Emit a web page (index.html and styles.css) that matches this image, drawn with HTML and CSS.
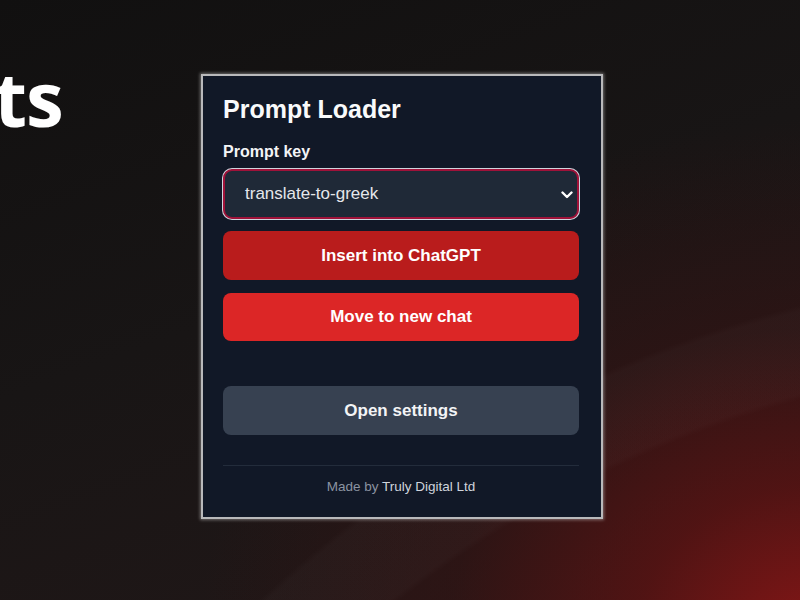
FILE: index.html
```html
<!DOCTYPE html>
<html lang="en">
<head>
<meta charset="utf-8">
<title>Prompt Loader</title>
<link rel="stylesheet" href="styles.css">
</head>
<body>
<div class="page">
  <div class="hero">
    <h1 class="hero-title">ts</h1>
  </div>
  <div class="popup">
    <h2 class="popup-title">Prompt Loader</h2>
    <label class="field-label">Prompt key</label>
    <div class="select" role="combobox">
      <span class="select-value">translate-to-greek</span>
      <svg class="chevron" width="12" height="8" viewBox="0 0 12 8"><path d="M1.5 1.5 L6 6 L10.5 1.5" fill="none" stroke="#ffffff" stroke-width="2.4" stroke-linecap="round" stroke-linejoin="round"/></svg>
    </div>
    <button class="btn btn-insert">Insert into ChatGPT</button>
    <button class="btn btn-move">Move to new chat</button>
    <button class="btn btn-settings">Open settings</button>
    <div class="divider"></div>
    <p class="footer">Made by <span class="brand">Truly Digital Ltd</span></p>
  </div>
</div>
</body>
</html>
```

FILE: styles.css
```css
* { box-sizing: border-box; }
html, body {
  margin: 0;
  height: 600px;
  overflow: hidden;
}
body {
  background-color: #161314;
  background-image:
    radial-gradient(circle at 1100px 1500px, transparent 0, transparent 1140px, rgba(255,255,255,0.02) 1146px, rgba(255,255,255,0.02) 1226px, transparent 1232px),
    radial-gradient(ellipse 620px 520px at 820px 640px, rgba(140,22,22,0.95) 0%, rgba(100,18,18,0.7) 30%, rgba(60,18,18,0.45) 60%, transparent 100%),
    linear-gradient(160deg, #111010 0%, #181515 45%, #231818 100%);
  font-family: "Liberation Sans", Arial, sans-serif;
}
.page {
  display: grid;
  grid-template-columns: 201px 402px;
  align-items: start;
}
.hero {
  overflow: hidden;
  padding-top: 60px;
}
.hero-title {
  margin: 0 0 0 -6px;
  font-family: "Open Sans", sans-serif;
  font-weight: 700;
  font-size: 76px;
  line-height: 76px;
  color: #ffffff;
  letter-spacing: -1px;
}
.popup {
  margin-top: 74px;
  width: 402px;
  background: #111827;
  border: 2px solid #b9b9bb;
  box-shadow: 0 0 3px 1px rgba(220,220,220,0.45);
  padding: 18px 22px 21px 20px;
  display: flex;
  flex-direction: column;
}
.popup-title {
  margin: 0;
  font-size: 25px;
  line-height: 30px;
  font-weight: 700;
  color: #f9fafb;
}
.field-label {
  margin-top: 18px;
  font-size: 16px;
  line-height: 20px;
  font-weight: 700;
  color: #f3f4f6;
}
.select {
  margin-top: 7px;
  height: 50px;
  background: #1f2937;
  border: 2px solid #9f1239;
  border-radius: 9px;
  box-shadow: 0 0 0 1px #cfd4dc;
  display: flex;
  align-items: center;
  justify-content: space-between;
  padding: 0 4px 0 20px;
}
.select-value {
  font-size: 17px;
  color: #e5e7eb;
}
.chevron { display: block; margin-top: 1px; }
.btn {
  display: block;
  width: 100%;
  border: none;
  border-radius: 8px;
  font-family: "Liberation Sans", Arial, sans-serif;
  font-weight: 700;
  font-size: 17px;
  color: #ffffff;
  padding: 0;
}
.btn-insert {
  margin-top: 12px;
  height: 49px;
  background: #b91c1c;
}
.btn-move {
  margin-top: 13px;
  height: 48px;
  background: #dc2626;
}
.btn-settings {
  margin-top: 45px;
  height: 49px;
  background: #374151;
  color: #f3f4f6;
}
.divider {
  margin-top: 30px;
  height: 1px;
  background: #232c3b;
}
.footer {
  margin: 12px 0 0;
  text-align: center;
  font-size: 13.5px;
  line-height: 18px;
  color: #8b93a1;
}
.brand { color: #cfd4dc; }
```
